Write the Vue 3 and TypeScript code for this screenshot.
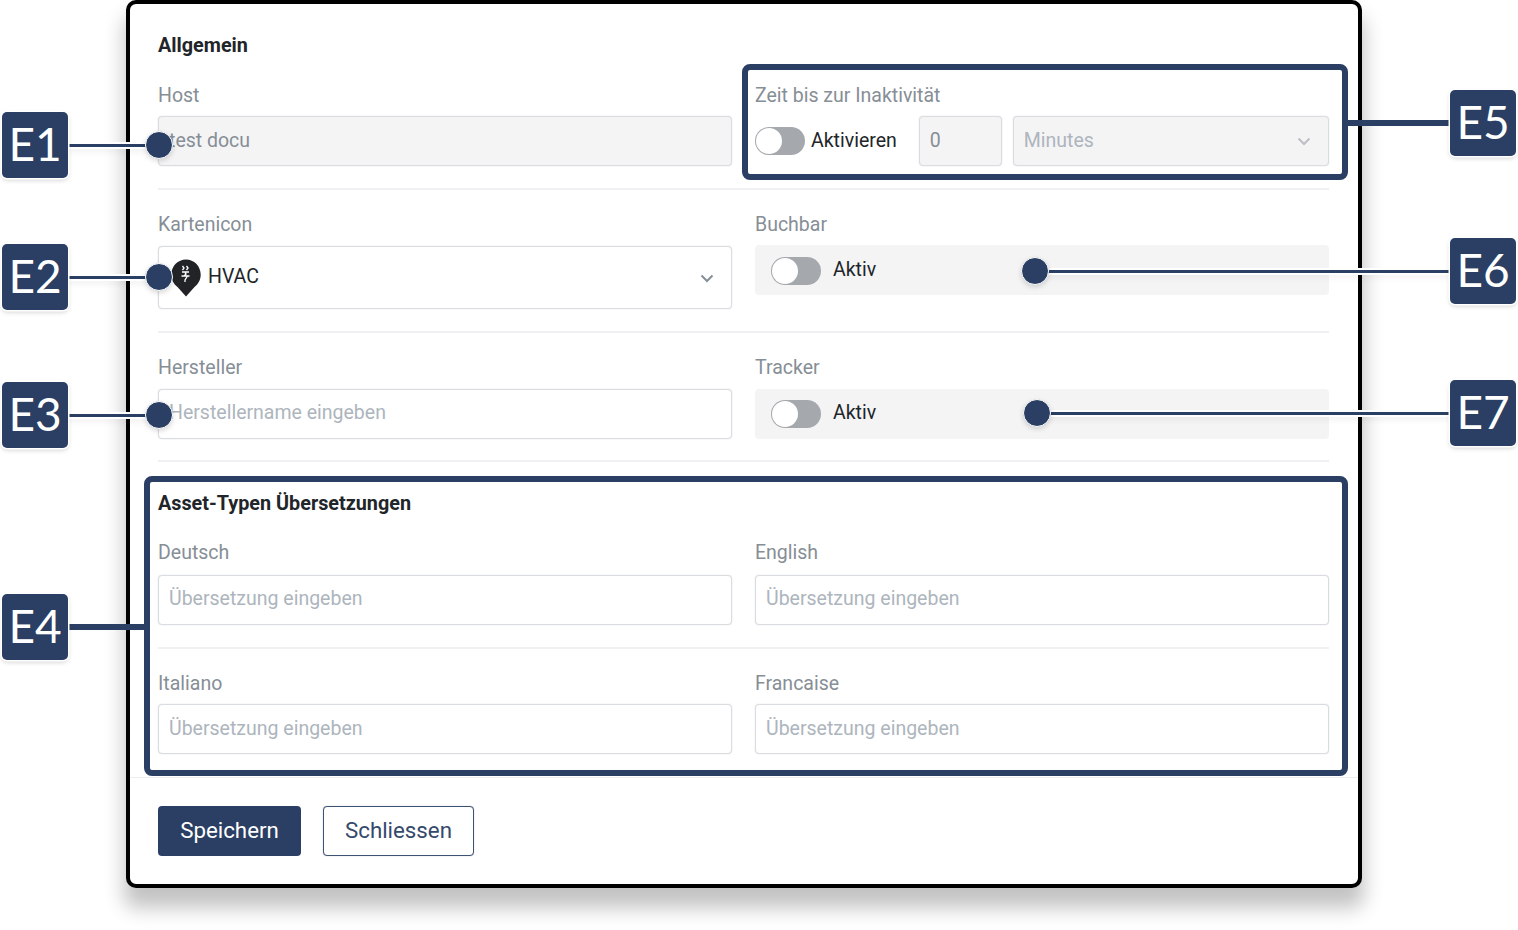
<script setup lang="ts">
interface Callout {
  id: string
  left: number
  top: number
}
const callouts: Callout[] = [
  { id: 'E1', left: 2, top: 112 },
  { id: 'E2', left: 2, top: 244 },
  { id: 'E3', left: 2, top: 382 },
  { id: 'E4', left: 2, top: 594 },
  { id: 'E5', left: 1450, top: 90 },
  { id: 'E6', left: 1450, top: 238 },
  { id: 'E7', left: 1450, top: 380 },
]
const dots = [
  { x: 159, y: 145 },
  { x: 159, y: 277 },
  { x: 159, y: 415 },
  { x: 1035, y: 271 },
  { x: 1037, y: 413 },
]
const lines = [
  { x: 68, y: 145, w: 80, h: 3 },
  { x: 68, y: 277, w: 80, h: 3 },
  { x: 68, y: 415, w: 80, h: 3 },
  { x: 1046, y: 271, w: 404, h: 3 },
  { x: 1048, y: 413, w: 402, h: 3 },
]
const thick = [
  { x: 68, y: 627, w: 78, h: 6 },
  { x: 1346, y: 123, w: 104, h: 6 },
]
</script>

<template>
  <div class="stage">
    <section class="modal">
      <div class="body">
        <h3 class="heading">Allgemein</h3>
        <div class="row row-first">
          <div class="field">
            <label class="label">Host</label>
            <div class="input disabled value-muted">test docu</div>
          </div>
          <div class="field">
            <label class="label">Zeit bis zur Inaktivität</label>
            <div class="inactivity">
              <span class="toggle"><span class="knob"></span></span>
              <span class="toggle-text tight">Aktivieren</span>
              <div class="input disabled value-muted number">0</div>
              <div class="input disabled select muted-text">
                <span>Minutes</span>
                <svg class="chevron" viewBox="0 0 16 16" width="16" height="16"><path d="M2.500 5.500 8 11l5.500-5.500" fill="none" stroke="#bcbfc4" stroke-width="2" /></svg>
              </div>
            </div>
          </div>
        </div>
        <hr class="rule" />
        <div class="row">
          <div class="field">
            <label class="label">Kartenicon</label>
            <div class="input select tall">
              <span class="icon-value">
                <svg class="pin" viewBox="0 0 30 38" width="30" height="38">
                  <path d="M15 37.500 6.500 28C2.600 25 .3 20.600.3 15.500.3 7 7 .4 15 .4s14.700 6.600 14.700 15.100c0 5.100-2.300 9.500-6.200 12.500z" fill="#212327" />
                  <path d="M11.500 7l1.500 2-1.500 2M15.500 7l1.500 2-1.500 2M11 13h7M14.500 13v3M10.500 17h8M15.500 14.500l-2.500 2.500h3.500l-2.500 4v2" fill="none" stroke="#fff" stroke-width="1.300" />
                </svg>
                <span>HVAC</span>
              </span>
              <svg class="chevron" viewBox="0 0 16 16" width="16" height="16"><path d="M2.500 5.500 8 11l5.500-5.500" fill="none" stroke="#868e96" stroke-width="2" /></svg>
            </div>
          </div>
          <div class="field">
            <label class="label">Buchbar</label>
            <div class="switch-box booked">
              <span class="toggle"><span class="knob"></span></span>
              <span class="toggle-text raised">Aktiv</span>
            </div>
          </div>
        </div>
        <hr class="rule" />
        <div class="row">
          <div class="field">
            <label class="label">Hersteller</label>
            <div class="input placeholder">Herstellername eingeben</div>
          </div>
          <div class="field">
            <label class="label">Tracker</label>
            <div class="switch-box">
              <span class="toggle"><span class="knob"></span></span>
              <span class="toggle-text raised">Aktiv</span>
            </div>
          </div>
        </div>
        <hr class="rule rule-short" />
        <h3 class="heading heading-second">Asset-Typen Übersetzungen</h3>
        <div class="row row-translate">
          <div class="field">
            <label class="label">Deutsch</label>
            <div class="input placeholder">Übersetzung eingeben</div>
          </div>
          <div class="field">
            <label class="label">English</label>
            <div class="input placeholder">Übersetzung eingeben</div>
          </div>
        </div>
        <hr class="rule" />
        <div class="row row-last">
          <div class="field">
            <label class="label">Italiano</label>
            <div class="input placeholder">Übersetzung eingeben</div>
          </div>
          <div class="field">
            <label class="label">Francaise</label>
            <div class="input placeholder">Übersetzung eingeben</div>
          </div>
        </div>
      </div>
      <footer class="footer">
        <button class="btn primary">Speichern</button>
        <button class="btn outline">Schliessen</button>
      </footer>
    </section>

    <div class="frame frame-e5"></div>
    <div class="frame frame-e4"></div>
    <div
      v-for="(l, i) in lines"
      :key="'l' + i"
      class="line"
      :style="{ left: l.x + 'px', top: l.y - l.h / 2 + 'px', width: l.w + 'px', height: l.h + 'px' }"
    ></div>
    <div
      v-for="(l, i) in thick"
      :key="'t' + i"
      class="line-thick"
      :style="{ left: l.x + 'px', top: l.y - l.h / 2 + 'px', width: l.w + 'px', height: l.h + 'px' }"
    ></div>
    <div
      v-for="(d, i) in dots"
      :key="'d' + i"
      class="dot"
      :style="{ left: d.x - 14 + 'px', top: d.y - 14 + 'px' }"
    ></div>
    <div
      v-for="c in callouts"
      :key="c.id"
      class="callout"
      :style="{ left: c.left + 'px', top: c.top + 'px' }"
    >{{ c.id }}</div>
  </div>
</template>

<style scoped>
.stage {
  position: relative;
  width: 1518px;
  height: 930px;
  overflow: hidden;
  background: #fff;
  font-family: Roboto, "Liberation Sans", sans-serif;
  font-size: 19.500px;
  color: #212529;
}
.modal {
  box-sizing: border-box;
  width: 1236px;
  height: 888px;
  margin-left: 126px;
  border: 4px solid #000;
  border-radius: 10px;
  background: #fff;
  box-shadow: 0 18px 20px 2px rgba(0, 0, 0, 0.24);
  display: flex;
  flex-direction: column;
}
.body {
  padding: 29px 29px 0 28px;
  flex: 1;
}
.heading {
  margin: 0;
  font-size: 19.800px;
  line-height: 26px;
  font-weight: 700;
  color: #212529;
}
.heading-second {
  margin-top: 29px;
}
.row {
  display: grid;
  grid-template-columns: 574px 574px;
  column-gap: 23px;
}
.row-first {
  margin-top: 24px;
}
.row-translate {
  margin-top: 23px;
}
.label {
  display: block;
  line-height: 26px;
  margin-bottom: 8px;
  color: #868e96;
}
.row-first .label,
.row-last .label {
  margin-bottom: 7px;
}
.row-translate .label {
  margin-bottom: 9px;
}
.input {
  box-sizing: border-box;
  height: 50px;
  padding: 0 10px 2px;
  display: flex;
  align-items: center;
  border: 1px solid #d9dce0;
  box-shadow: 0 0 1.500px rgba(0, 0, 0, 0.14);
  border-radius: 4px;
  background: #fff;
  min-width: 0;
}
.tall {
  height: 63px;
  padding-left: 12px;
}
.disabled {
  background: #f4f4f5;
}
.value-muted {
  color: #868e96;
}
.muted-text {
  color: #adb5bd;
}
.placeholder {
  color: #adb5bd;
  padding-bottom: 4px;
}
.row-last .placeholder {
  padding-bottom: 2px;
}
.select {
  justify-content: space-between;
}
.chevron {
  margin-right: 6px;
  margin-top: 2px;
  flex: none;
}
.rule {
  border: 0;
  height: 2px;
  margin: 22px 0;
  background: #eef0f2;
}
.rule-short {
  margin: 21px 0 0;
}
.inactivity {
  display: flex;
  align-items: center;
}
.number {
  width: 83px;
  margin-left: 22px;
  flex: none;
}
.select.disabled {
  flex: 1;
  margin-left: 11px;
}
.icon-value {
  display: flex;
  align-items: center;
  gap: 7px;
}
.pin {
  flex: none;
  margin-top: 3px;
}
.toggle {
  box-sizing: border-box;
  display: block;
  flex: none;
  width: 50px;
  height: 28px;
  border-radius: 14px;
  background: #a5a8ac;
  padding: 1px;
}
.knob {
  box-sizing: border-box;
  display: block;
  width: 26px;
  height: 26px;
  border-radius: 50%;
  background: #fff;
}
.toggle-text {
  margin-left: 12px;
  color: #212529;
}
.raised {
  margin-bottom: 3px;
}
.tight {
  margin-left: 6px;
  margin-bottom: 2px;
}
.switch-box {
  box-sizing: border-box;
  height: 50px;
  padding: 0 16px;
  display: flex;
  align-items: center;
  background: #f4f4f5;
  border-radius: 4px;
}
.booked {
  margin-top: -1px;
  padding-top: 1px;
}
.footer {
  box-sizing: border-box;
  height: 107px;
  padding: 28px 28px 0;
  display: flex;
  align-items: flex-start;
  gap: 22px;
  border-top: 1.500px solid #eceef1;
}
.btn {
  box-sizing: border-box;
  height: 50px;
  font-family: inherit;
  font-size: 22.300px;
  border-radius: 4px;
  padding: 0 0 2px;
}
.primary {
  width: 143px;
  background: #2a3f63;
  border: 0;
  color: #fff;
}
.outline {
  width: 151px;
  background: #fff;
  border: 1px solid #3e5273;
  box-shadow: 0 0 1px rgba(42, 63, 99, 0.5);
  color: #34496c;
}
.frame {
  position: absolute;
  box-sizing: border-box;
  border: 6px solid #2a3f63;
  border-radius: 8px;
}
.frame-e5 {
  left: 742px;
  top: 64px;
  width: 606px;
  height: 116px;
}
.frame-e4 {
  left: 144px;
  top: 476px;
  width: 1204px;
  height: 300px;
}
.line {
  position: absolute;
  background: #2a3f63;
  box-shadow: 0 0 0 2px #fff, 0 4px 6px rgba(0, 0, 0, 0.1);
}
.line-thick {
  position: absolute;
  background: #2a3f63;
}
.dot {
  position: absolute;
  box-sizing: border-box;
  width: 28px;
  height: 28px;
  border-radius: 50%;
  background: #2a3f63;
  border: 1.500px solid #fff;
  box-shadow: 0 2px 5px rgba(0, 0, 0, 0.15);
}
.callout {
  position: absolute;
  box-sizing: border-box;
  width: 66px;
  height: 66px;
  padding-bottom: 3px;
  display: flex;
  align-items: center;
  justify-content: center;
  background: #2a3f63;
  color: #fff;
  font-family: Lato, sans-serif;
  font-size: 46px;
  border-radius: 5px;
  box-shadow: 0 0 0 1.500px #fff, 0 2px 5px rgba(0, 0, 0, 0.2);
}
</style>
